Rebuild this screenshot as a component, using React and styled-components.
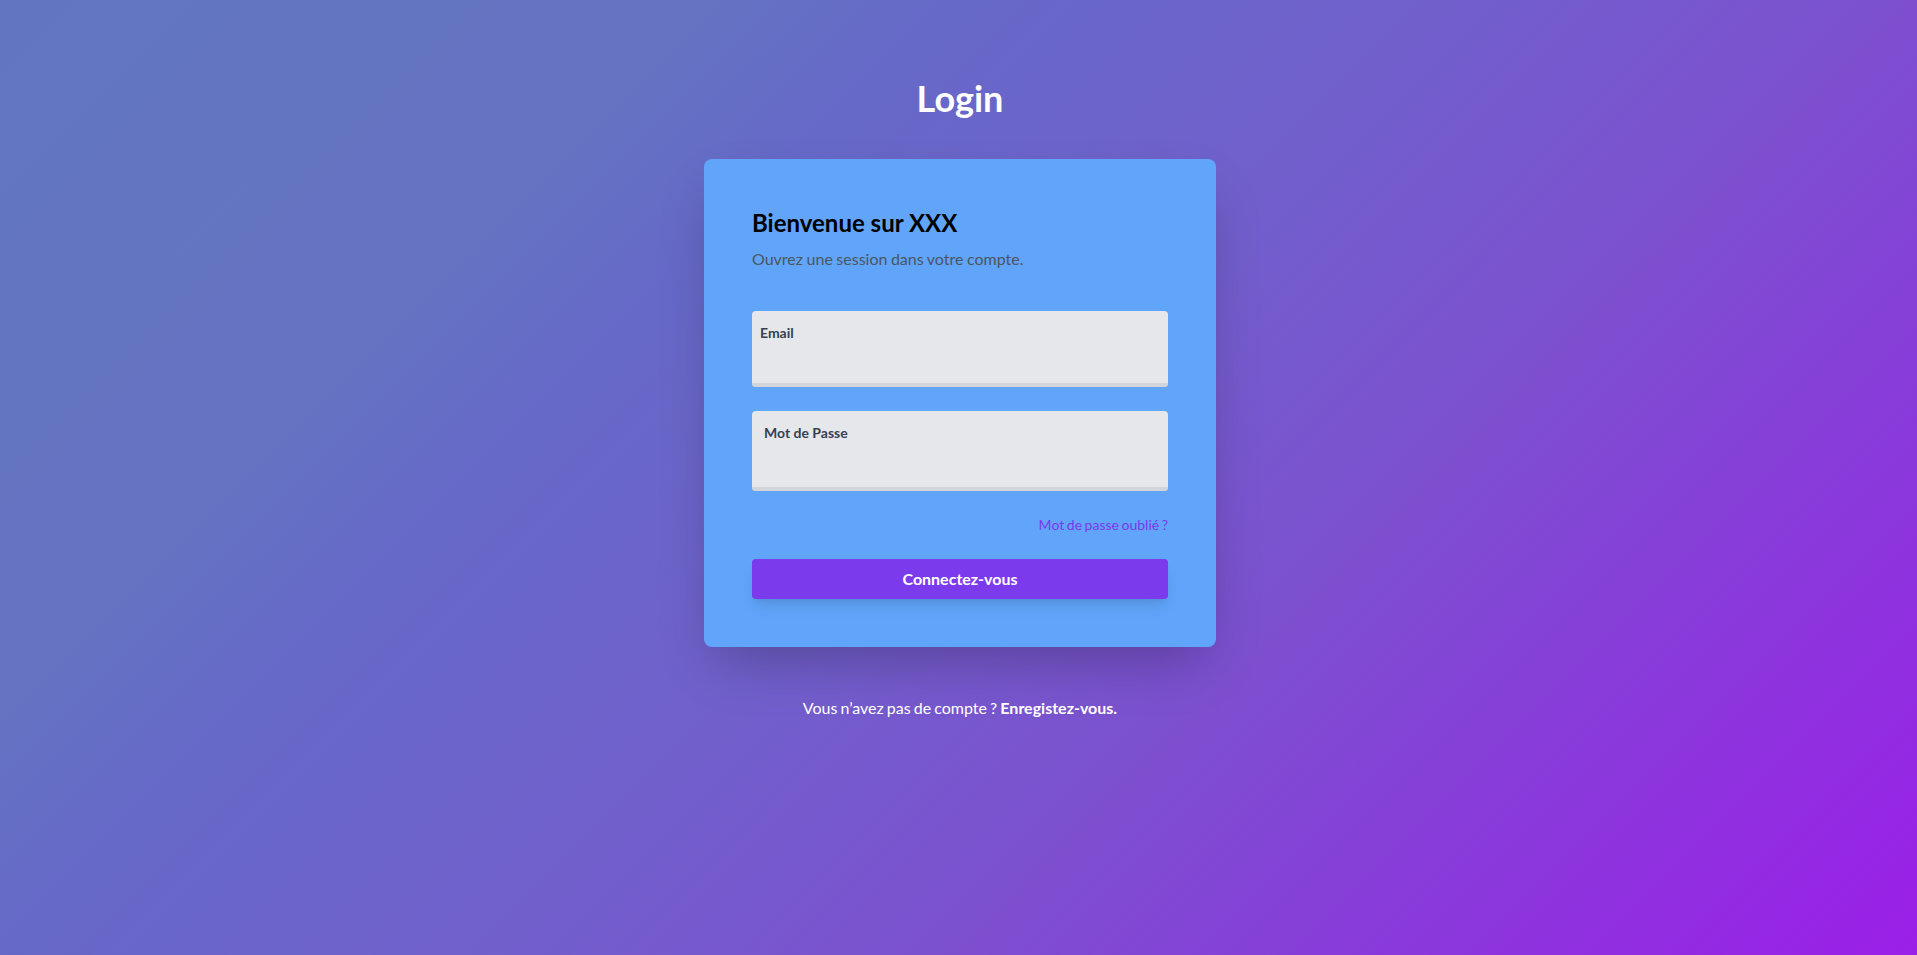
import React from "react";
import styled, { createGlobalStyle } from "styled-components";

const GlobalStyle = createGlobalStyle`
  html, body {
    margin: 0;
    padding: 0;
  }
  body {
    font-family: Lato, "Open Sans", sans-serif;
  }
  * {
    box-sizing: border-box;
  }
`;

const Page = styled.main`
  min-height: 100vh;
  display: flex;
  flex-direction: column;
  align-items: center;
  padding: 78px 0 0 3px;
  background: linear-gradient(
    135deg,
    #6276c0 0%,
    #6473c2 25%,
    #6669c8 33%,
    #7160cc 50%,
    #7d4fd0 67%,
    #8b37dc 83%,
    #9b1fe8 100%
  );
`;

const Title = styled.h1`
  margin: 0 0 41px;
  font-size: 36px;
  line-height: 40px;
  font-weight: 700;
  color: #ffffff;
`;

const Card = styled.section`
  width: 512px;
  padding: 48px;
  background: #60a5fa;
  border-radius: 8px;
  box-shadow: 0 25px 50px -12px rgba(0, 0, 0, 0.25);
`;

const Heading = styled.h3`
  margin: 0;
  font-size: 24px;
  line-height: 32px;
  font-weight: 700;
  color: #000000;
`;

const Subtitle = styled.p`
  margin: 8px 0 0;
  font-size: 16px;
  line-height: 24px;
  word-spacing: -0.6px;
  color: #4b5563;
`;

const Form = styled.form`
  margin-top: 40px;
  display: flex;
  flex-direction: column;
`;

const Field = styled.div`
  margin-bottom: 24px;
  padding-top: 12px;
  background: #e5e7eb;
  border-radius: 4px;
`;

const Label = styled.label`
  display: block;
  margin: 0 0 ${p => p.$gap}px ${p => p.$indent}px;
  font-size: 14px;
  line-height: 20px;
  font-weight: 700;
  color: #374151;
`;

const Input = styled.input`
  display: block;
  width: 100%;
  height: 36px;
  padding: 0 12px 12px;
  border: none;
  border-bottom: 4px solid #d1d5db;
  border-radius: 0 0 4px 4px;
  background: #e5e7eb;
  font-family: inherit;
  font-size: 16px;
  color: #374151;
  outline: none;
`;

const LinkRow = styled.div`
  display: flex;
  justify-content: flex-end;
  margin-bottom: 24px;
`;

const Forgot = styled.a`
  font-size: 14px;
  line-height: 20px;
  word-spacing: -1px;
  color: #7c3aed;
  text-decoration: none;
`;

const Submit = styled.button`
  width: 100%;
  height: 40px;
  padding: 0;
  border: none;
  border-radius: 4px;
  background: #7c3aed;
  color: #ffffff;
  font-family: inherit;
  font-size: 16px;
  line-height: 24px;
  font-weight: 700;
  box-shadow: 0 10px 15px -3px rgba(0, 0, 0, 0.1), 0 4px 6px -2px rgba(0, 0, 0, 0.05);
  cursor: pointer;
`;

const Footer = styled.p`
  margin: 49px 0 0;
  font-size: 16px;
  line-height: 24px;
  word-spacing: -1px;
  color: #ffffff;

  a {
    font-weight: 700;
    color: #ffffff;
    text-decoration: none;
  }
`;

const App = () => (
  <Page>
    <GlobalStyle />
    <Title>Login</Title>
    <Card>
      <Heading>Bienvenue sur XXX</Heading>
      <Subtitle>Ouvrez une session dans votre compte.</Subtitle>
      <Form onSubmit={e => e.preventDefault()}>
        <Field>
          <Label htmlFor="email" $indent={8} $gap={8}>Email</Label>
          <Input id="email" type="text" />
        </Field>
        <Field>
          <Label htmlFor="password" $indent={12} $gap={12}>Mot de Passe</Label>
          <Input id="password" type="password" />
        </Field>
        <LinkRow>
          <Forgot href="#">Mot de passe oublié ?</Forgot>
        </LinkRow>
        <Submit type="submit">Connectez-vous</Submit>
      </Form>
    </Card>
    <Footer>
      Vous n’avez pas de compte ? <a href="#">Enregistez-vous.</a>
    </Footer>
  </Page>
);

export default App;
